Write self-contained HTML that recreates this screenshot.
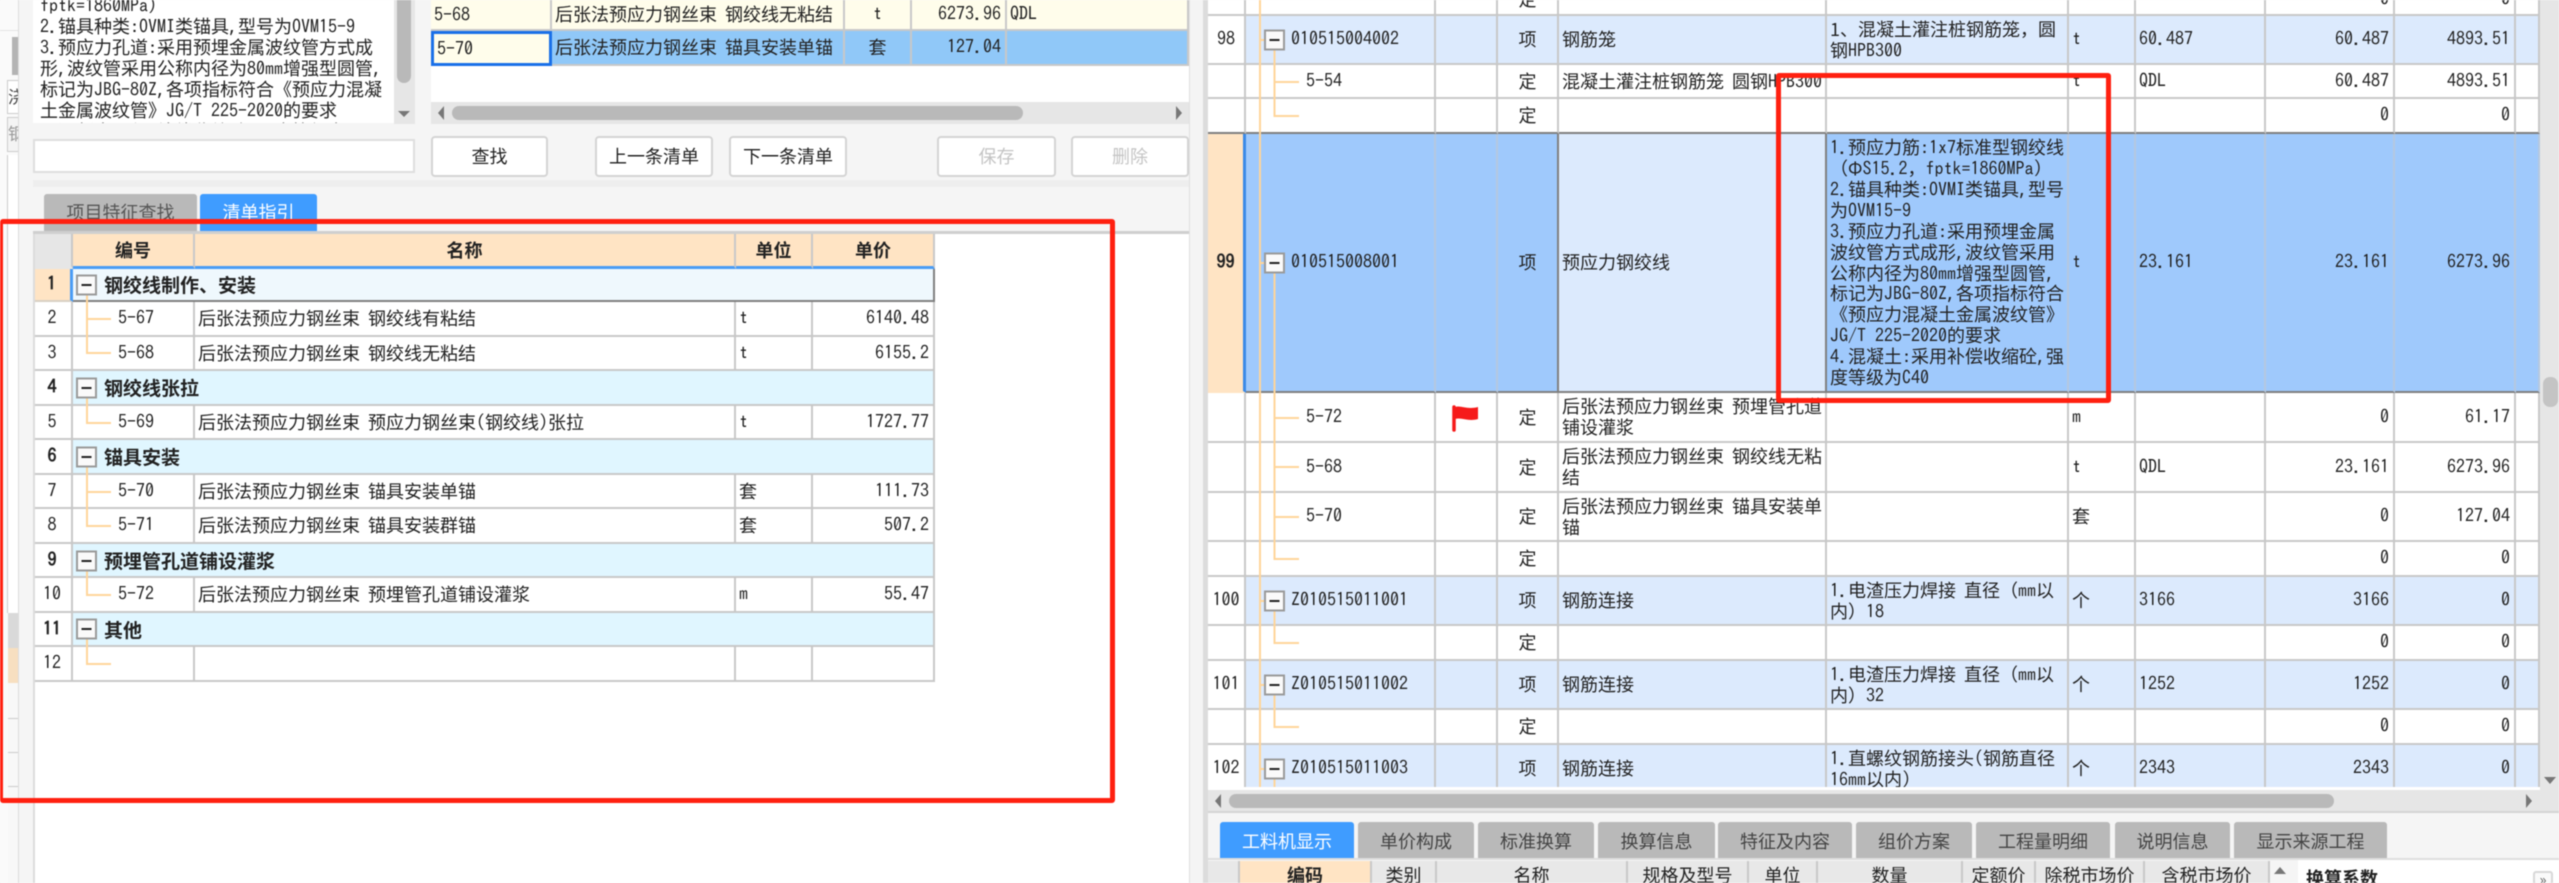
<!DOCTYPE html>
<html lang="zh-CN"><head><meta charset="utf-8"><title>清单指引</title>
<style>
html,body{margin:0;padding:0;width:2559px;height:883px;overflow:hidden;background:#f5f5f5}
#root{position:relative;width:2559px;height:883px;overflow:hidden;background:#f5f5f5;color:#222;font:18px/21px "WenQuanYi Zen Hei","Noto Sans CJK SC",sans-serif;word-spacing:4px;filter:blur(.5px)}
i,.m{font-family:"IPAGothic","Liberation Mono",monospace;font-style:normal;word-spacing:0}
i{line-height:1}
.a{position:absolute;white-space:nowrap}
table{border-collapse:separate;border-spacing:0;table-layout:fixed;position:absolute;left:0;top:0}
td{box-sizing:border-box;padding:0 3px;border-right:2px solid #c8c8c8;border-bottom:2px solid #c8c8c8;white-space:nowrap;overflow:hidden;background:#fff;vertical-align:middle}
.c{text-align:center;padding:0}.r{text-align:right;padding-right:4px}
.code{padding-left:45px}.sub{padding-left:60px}
.h td{background:#dceafd}
.dk td{border-bottom-color:#808080}
.sel td{background:#9fc9fc;border-bottom-color:#808080;border-right-color:#b4c8e0}
.btn{position:absolute;box-sizing:border-box;height:41px;top:136px;border:2px solid #d4d4d4;border-radius:4px;background:#fff;text-align:center;line-height:37px}
.dis{color:#c4c4c4}
.tab{position:absolute;box-sizing:border-box;height:36px;top:822px;background:#b9b9b9;color:#444;text-align:center;line-height:38px;border-radius:3px 3px 0 0}
.lg td{padding-left:3px}
.lg .n{text-align:center;padding:0}
.lg .sec td{background:#e0f6ff;font-weight:bold}
.lg .sec .n{background:#fff;font-weight:bold}
.lg .sec .t{padding-left:31px;font-size:19px}
.lg .hd td{background:#ffe4c4;font-weight:bold;text-align:center;padding:0;border-bottom:3px solid #4a9cf5}
.lg .s5{padding-left:45px}
.red{position:absolute;box-sizing:border-box;border:5px solid #ff2010;border-radius:3px;z-index:9}
</style></head><body><div id="root">

<!-- far left strip -->
<div class="a" style="left:0;top:0;width:18px;height:883px;background:#fafafa"></div>
<div class="a" style="left:0;top:30px;width:18px;height:1px;background:#e4e4e4"></div>
<div class="a" style="left:12px;top:37px;width:6px;height:38px;background:#b4b4b4"></div>
<div class="a" style="left:7px;top:80px;width:11px;height:32px;background:#fff;border:1px solid #ccc;border-right:0;overflow:hidden;color:#444;font-size:17px;line-height:30px">浇</div>
<div class="a" style="left:7px;top:117px;width:11px;height:33px;background:#f4f4f4;border:1px solid #ccc;border-right:0;overflow:hidden;color:#999;font-size:17px;line-height:30px">钢</div>
<div class="a" style="left:7px;top:155px;width:11px;height:458px;background:#fff;border-left:1px solid #ccc"></div>
<div class="a" style="left:8px;top:613px;width:10px;height:35px;background:#d9d9d9"></div>
<div class="a" style="left:8px;top:648px;width:10px;height:35px;background:#f7dfc0"></div>
<div class="a" style="left:8px;top:683px;width:10px;height:200px;background:#f8f8f8"></div>
<div class="a" style="left:8px;top:718px;width:10px;height:1px;background:#ccc"></div>
<div class="a" style="left:8px;top:752px;width:10px;height:1px;background:#ccc"></div>
<div class="a" style="left:8px;top:786px;width:10px;height:1px;background:#ccc"></div>
<div class="a" style="left:18px;top:0;width:1px;height:883px;background:#dcdcdc"></div>

<!-- textarea -->
<div class="a" style="left:33px;top:0;width:361px;height:123px;background:#fff;overflow:hidden">
<div class="a" style="left:7px;top:-5px">
<div><i>fptk=1860MPa)</i></div>
<div><i>2.</i>锚具种类<i>:OVMI</i>类锚具<i>,</i>型号为<i>OVM15-9</i></div>
<div><i>3.</i>预应力孔道<i>:</i>采用预埋金属波纹管方式成</div>
<div>形<i>,</i>波纹管采用公称内径为<i>80mm</i>增强型圆管<i>,</i></div>
<div>标记为<i>JBG-80Z,</i>各项指标符合《预应力混凝</div>
<div>土金属波纹管》<i>JG/T 225-2020</i>的要求</div>
<div><i>4.</i>混凝土<i>:</i>采用补偿收缩砼<i>,</i>强度等级为<i>C40</i></div>
</div></div>
<div class="a" style="left:394px;top:0;width:21px;height:124px;background:#e6e6e6"></div>
<div class="a" style="left:397px;top:-10px;width:14px;height:93px;background:#b9b9b9;border-radius:7px"></div>

<!-- top mini grid -->
<div class="a" style="left:431px;top:0;width:758px;height:102px;background:#fff;overflow:hidden">
<table style="width:758px">
<colgroup><col style="width:121px"><col style="width:293px"><col style="width:67px"><col style="width:95px"><col style="width:182px"></colgroup>
<tr style="height:31px"><td style="background:#fffdeb"><i>5-68</i></td><td style="background:#fffdeb">后张法预应力钢丝束 钢绞线无粘结</td><td class="c m" style="background:#fffdeb">t</td><td class="r m" style="background:#fffdeb">6273.96</td><td class="m" style="background:#fffdeb">QDL</td></tr>
<tr style="height:35px"><td style="background:#fffdeb;border:3px solid #1a70e8"><i>5-70</i></td><td style="background:#90c8f8">后张法预应力钢丝束 锚具安装单锚</td><td class="c" style="background:#90c8f8">套</td><td class="r m" style="background:#90c8f8">127.04</td><td style="background:#90c8f8"></td></tr>
</table></div>
<div class="a" style="left:431px;top:102px;width:758px;height:22px;background:#e6e6e6"></div>
<div class="a" style="left:452px;top:106px;width:571px;height:14px;background:#b9b9b9;border-radius:7px"></div>

<!-- search row -->
<div class="a" style="left:33px;top:139px;width:382px;height:34px;box-sizing:border-box;background:#fff;border:2px solid #dedede"></div>
<div class="btn" style="left:431px;width:117px">查找</div>
<div class="btn" style="left:595px;width:118px">上一条清单</div>
<div class="btn" style="left:729px;width:118px">下一条清单</div>
<div class="btn dis" style="left:937px;width:119px">保存</div>
<div class="btn dis" style="left:1071px;width:118px">删除</div>
<div class="a" style="left:33px;top:180px;width:1156px;height:7px;background:#eeeeee"></div>

<!-- left tabs -->
<div class="a" style="left:44px;top:194px;width:153px;height:37px;background:#b9b9b9;color:#555;text-align:center;line-height:37px;border-radius:3px 3px 0 0">项目特征查找</div>
<div class="a" style="left:200px;top:194px;width:117px;height:37px;background:#3f9cff;color:#fff;text-align:center;line-height:37px;border-radius:3px 3px 0 0">清单指引</div>

<!-- lower left panel -->
<div class="a" style="left:33px;top:231px;width:1156px;height:652px;background:#fff;border-top:3px solid #cfcfcf;box-sizing:border-box"></div>
<div class="a" style="left:33px;top:234px;width:902px;height:449px;overflow:hidden">
<table class="lg" style="width:902px">
<colgroup><col style="width:40px"><col style="width:122px"><col style="width:541px"><col style="width:77px"><col style="width:122px"></colgroup>
<tr class="hd" style="height:35px"><td style="background:#e6e6e6;border-bottom-color:#e6e6e6"></td><td>编号</td><td>名称</td><td>单位</td><td>单价</td></tr>
<tr class="sec dk" style="height:33px"><td class="n m" style="background:#ffe4c4;border-right:3px solid #4a9cf5;border-bottom-color:#d8d0c4">1</td><td colspan="4" class="t" style="background:#eff8fd;border-right-color:#808080">钢绞线制作、安装</td></tr>
<tr style="height:35px"><td class="n m">2</td><td class="s5 m">5-67</td><td>后张法预应力钢丝束 钢绞线有粘结</td><td class="m">t</td><td class="r m">6140.48</td></tr>
<tr style="height:34px"><td class="n m">3</td><td class="s5 m">5-68</td><td>后张法预应力钢丝束 钢绞线无粘结</td><td class="m">t</td><td class="r m">6155.2</td></tr>
<tr class="sec" style="height:35px"><td class="n m">4</td><td colspan="4" class="t">钢绞线张拉</td></tr>
<tr style="height:34px"><td class="n m">5</td><td class="s5 m">5-69</td><td>后张法预应力钢丝束 预应力钢丝束<i>(</i>钢绞线<i>)</i>张拉</td><td class="m">t</td><td class="r m">1727.77</td></tr>
<tr class="sec" style="height:35px"><td class="n m">6</td><td colspan="4" class="t">锚具安装</td></tr>
<tr style="height:34px"><td class="n m">7</td><td class="s5 m">5-70</td><td>后张法预应力钢丝束 锚具安装单锚</td><td>套</td><td class="r m">111.73</td></tr>
<tr style="height:35px"><td class="n m">8</td><td class="s5 m">5-71</td><td>后张法预应力钢丝束 锚具安装群锚</td><td>套</td><td class="r m">507.2</td></tr>
<tr class="sec" style="height:34px"><td class="n m">9</td><td colspan="4" class="t">预埋管孔道铺设灌浆</td></tr>
<tr style="height:35px"><td class="n m">10</td><td class="s5 m">5-72</td><td>后张法预应力钢丝束 预埋管孔道铺设灌浆</td><td class="m">m</td><td class="r m">55.47</td></tr>
<tr class="sec" style="height:34px"><td class="n m">11</td><td colspan="4" class="t">其他</td></tr>
<tr style="height:35px"><td class="n m">12</td><td></td><td></td><td></td><td></td></tr>
</table></div>
<div class="a" style="left:33px;top:234px;width:2px;height:649px;background:#dcdcdc"></div>

<!-- divider -->
<div class="a" style="left:1189px;top:0;width:14px;height:883px;background:#f4f4f4;border-left:1px solid #e0e0e0;box-sizing:border-box"></div>
<div class="a" style="left:1203px;top:0;width:5px;height:883px;background:#dcdcdc"></div>

<!-- right table -->
<div class="a" style="left:1208px;top:0;width:1351px;height:790px;background:#fff"></div>
<div class="a" style="left:1208px;top:0;width:1332px;height:787px;overflow:hidden">
<table style="width:1332px;top:-20px">
<colgroup><col style="width:38px"><col style="width:190px"><col style="width:62px"><col style="width:61px"><col style="width:268px"><col style="width:242px"><col style="width:67px"><col style="width:130px"><col style="width:129px"><col style="width:121px"><col style="width:24px"></colgroup>
<tr style="height:36px"><td></td><td></td><td></td><td class="c" style="vertical-align:bottom;padding-bottom:4px">定</td><td></td><td></td><td></td><td></td><td class="r m" style="vertical-align:bottom;padding-bottom:4px">0</td><td class="r m" style="vertical-align:bottom;padding-bottom:4px">0</td><td></td></tr>
<tr class="h" style="height:49px"><td class="c m" style="background:#fff">98</td><td class="code m">010515004002</td><td></td><td class="c">项</td><td>钢筋笼</td><td>1、混凝土灌注桩钢筋笼，圆<br>钢<i>HPB300</i></td><td class="m">t</td><td class="m">60.487</td><td class="r m">60.487</td><td class="r m">4893.51</td><td></td></tr>
<tr style="height:34px"><td></td><td class="sub m">5-54</td><td></td><td class="c">定</td><td>混凝土灌注桩钢筋笼 圆钢<i>HPB300</i></td><td></td><td class="m">t</td><td class="m">QDL</td><td class="r m">60.487</td><td class="r m">4893.51</td><td></td></tr>
<tr class="dk" style="height:35px"><td></td><td></td><td></td><td class="c">定</td><td></td><td></td><td></td><td></td><td class="r m">0</td><td class="r m">0</td><td></td></tr>
<tr class="sel" style="height:259px"><td class="c m" style="background:#ffe4c4;font-weight:bold;border-right:3px solid #3a8ae8;border-bottom-color:#ffe4c4">99</td><td class="code m">010515008001</td><td></td><td class="c" style="border-right:2px solid #808080">项</td><td style="background:#dceafd;border-right:2px solid #808080">预应力钢绞线</td><td style="line-height:20.9px"><i>1.</i>预应力筋<i>:1x7</i>标准型钢绞线<br>（Φ<i>S15.2</i>，<i>fptk=1860MPa)</i><br><i>2.</i>锚具种类<i>:OVMI</i>类锚具<i>,</i>型号<br>为<i>OVM15-9</i><br><i>3.</i>预应力孔道<i>:</i>采用预埋金属<br>波纹管方式成形<i>,</i>波纹管采用<br>公称内径为<i>80mm</i>增强型圆管<i>,</i><br>标记为<i>JBG-80Z,</i>各项指标符合<br>《预应力混凝土金属波纹管》<br><i>JG/T 225-2020</i>的要求<br><i>4.</i>混凝土<i>:</i>采用补偿收缩砼<i>,</i>强<br>度等级为<i>C40</i></td><td class="m">t</td><td class="m">23.161</td><td class="r m">23.161</td><td class="r m">6273.96</td><td></td></tr>
<tr style="height:50px"><td></td><td class="sub m">5-72</td><td></td><td class="c">定</td><td>后张法预应力钢丝束 预埋管孔道<br>铺设灌浆</td><td></td><td class="m">m</td><td></td><td class="r m">0</td><td class="r m">61.17</td><td></td></tr>
<tr style="height:50px"><td></td><td class="sub m">5-68</td><td></td><td class="c">定</td><td>后张法预应力钢丝束 钢绞线无粘<br>结</td><td></td><td class="m">t</td><td class="m">QDL</td><td class="r m">23.161</td><td class="r m">6273.96</td><td></td></tr>
<tr style="height:49px"><td></td><td class="sub m">5-70</td><td></td><td class="c">定</td><td>后张法预应力钢丝束 锚具安装单<br>锚</td><td></td><td>套</td><td></td><td class="r m">0</td><td class="r m">127.04</td><td></td></tr>
<tr style="height:35px"><td></td><td></td><td></td><td class="c">定</td><td></td><td></td><td></td><td></td><td class="r m">0</td><td class="r m">0</td><td></td></tr>
<tr class="h" style="height:49px"><td class="c m" style="background:#fff">100</td><td class="code m">Z010515011001</td><td></td><td class="c">项</td><td>钢筋连接</td><td><i>1.</i>电渣压力焊接 直径（<i>mm</i>以<br>内）<i>18</i></td><td>个</td><td class="m">3166</td><td class="r m">3166</td><td class="r m">0</td><td></td></tr>
<tr style="height:35px"><td></td><td></td><td></td><td class="c">定</td><td></td><td></td><td></td><td></td><td class="r m">0</td><td class="r m">0</td><td></td></tr>
<tr class="h" style="height:49px"><td class="c m" style="background:#fff">101</td><td class="code m">Z010515011002</td><td></td><td class="c">项</td><td>钢筋连接</td><td><i>1.</i>电渣压力焊接 直径（<i>mm</i>以<br>内）<i>32</i></td><td>个</td><td class="m">1252</td><td class="r m">1252</td><td class="r m">0</td><td></td></tr>
<tr style="height:35px"><td></td><td></td><td></td><td class="c">定</td><td></td><td></td><td></td><td></td><td class="r m">0</td><td class="r m">0</td><td></td></tr>
<tr class="h" style="height:49px"><td class="c m" style="background:#fff">102</td><td class="code m">Z010515011003</td><td></td><td class="c">项</td><td>钢筋连接</td><td><i>1.</i>直螺纹钢筋接头<i>(</i>钢筋直径<br><i>16mm</i>以内<i>)</i></td><td>个</td><td class="m">2343</td><td class="r m">2343</td><td class="r m">0</td><td></td></tr>
</table></div>

<!-- right scrollbars -->
<div class="a" style="left:2540px;top:0;width:19px;height:790px;background:#e6e6e6"></div>
<div class="a" style="left:2543px;top:377px;width:15px;height:30px;background:#c4c4c4;border-radius:7px"></div>
<div class="a" style="left:1208px;top:790px;width:1351px;height:23px;background:#e6e6e6;border-bottom:2px solid #d4d4d4;box-sizing:border-box"></div>
<div class="a" style="left:1229px;top:794px;width:1105px;height:14px;background:#b9b9b9;border-radius:7px"></div>

<!-- bottom tabs -->
<div class="tab" style="left:1220px;width:134px;background:#3f9cff;color:#fff">工料机显示</div>
<div class="tab" style="left:1358px;width:116px">单价构成</div>
<div class="tab" style="left:1478px;width:116px">标准换算</div>
<div class="tab" style="left:1598px;width:117px">换算信息</div>
<div class="tab" style="left:1718px;width:134px">特征及内容</div>
<div class="tab" style="left:1856px;width:116px">组价方案</div>
<div class="tab" style="left:1976px;width:134px">工程量明细</div>
<div class="tab" style="left:2115px;width:115px">说明信息</div>
<div class="tab" style="left:2234px;width:153px">显示来源工程</div>
<div class="a" style="left:1208px;top:858px;width:1351px;height:2px;background:#dedede"></div>

<!-- bottom grid header -->
<div class="a" style="left:1208px;top:861px;width:1062px;height:22px;overflow:hidden;background:#e8e8e8">
<table style="width:1062px">
<colgroup><col style="width:32px"><col style="width:132px"><col style="width:65px"><col style="width:191px"><col style="width:121px"><col style="width:69px"><col style="width:145px"><col style="width:73px"><col style="width:109px"><col style="width:125px"></colgroup>
<tr style="height:30px">
<td style="background:#e8e8e8"></td><td class="c" style="background:#ffe4c4;font-weight:bold">编码</td><td class="c" style="background:#e8e8e8">类别</td><td class="c" style="background:#e8e8e8">名称</td><td class="c" style="background:#e8e8e8">规格及型号</td><td class="c" style="background:#e8e8e8">单位</td><td class="c" style="background:#e8e8e8">数量</td><td class="c" style="background:#e8e8e8">定额价</td><td class="c" style="background:#e8e8e8">除税市场价</td><td class="c" style="background:#e8e8e8">含税市场价</td></tr>
</table></div>
<div class="a" style="left:2298px;top:860px;width:261px;height:23px;background:#fff;overflow:hidden"><span class="a" style="left:8px;top:8px;font-weight:bold">换算系数</span></div>
<div class="a" style="left:2533px;top:871px;width:20px;height:14px;box-sizing:border-box;border:2px solid #d8d8d8;border-radius:3px;background:#fafafa;color:#666;font-size:15px;line-height:13px;text-align:center">»</div>

<!-- tree lines, boxes, arrows, flag -->
<svg class="a" style="left:0;top:0;z-index:5" width="2559" height="883" viewBox="0 0 2559 883">
<defs><g id="b"><rect x="-9.5" y="-9.5" width="19" height="19" fill="#fafafa" stroke="#9a9a9a" stroke-width="2"/><path d="M-5 0H5" stroke="#222" stroke-width="2"/></g></defs>
<g fill="none" stroke="#ffd59a" stroke-width="2">
<path d="M87 294V353H111M87 319H111M87 397V423H111M87 466V526H111M87 492H111M87 570V595H111M87 638V664H111"/>
<path d="M1260 0V787M1260 40H1265M1260 263H1265M1260 601H1265M1260 685H1265M1260 769H1265"/>
<path d="M1274.5 49V116H1299M1274.5 82H1299M1274.5 272V559H1299M1274.5 418H1299M1274.5 467H1299M1274.5 517H1299M1274.5 610V643H1299M1274.5 694V727H1299M1274.5 778V787"/>
</g>
<use href="#b" x="86.5" y="285"/><use href="#b" x="86.5" y="388"/><use href="#b" x="86.5" y="457"/><use href="#b" x="86.5" y="561"/><use href="#b" x="86.5" y="629"/>
<use href="#b" x="1274.5" y="40"/><use href="#b" x="1274.5" y="263"/><use href="#b" x="1274.5" y="601"/><use href="#b" x="1274.5" y="685"/><use href="#b" x="1274.5" y="769"/>
<g fill="#777">
<polygon points="398,111 410,111 404,117"/>
<polygon points="444,106 444,120 438,113"/>
<polygon points="1176,106 1176,120 1182,113"/>
<polygon points="1221,794 1221,808 1215,801"/>
<polygon points="2526,794 2526,808 2532,801"/>
<polygon points="2544,777 2556,777 2550,784"/>
<polygon points="2274,874 2286,874 2280,867"/>
</g>
<path d="M1454 407V430" stroke="#f61a1a" stroke-width="3.5" stroke-linecap="round" fill="none"/>
<path d="M1455 407C1461 405 1467 410 1478 407V419C1468 422 1462 417 1455 419Z" fill="#f61a1a"/>
</svg>

<!-- red annotation boxes -->
<div class="red" style="left:0;top:219px;width:1115px;height:584px;border-left-width:3px"></div>
<div class="red" style="left:1776px;top:73px;width:335px;height:330px"></div>

</div></body></html>
